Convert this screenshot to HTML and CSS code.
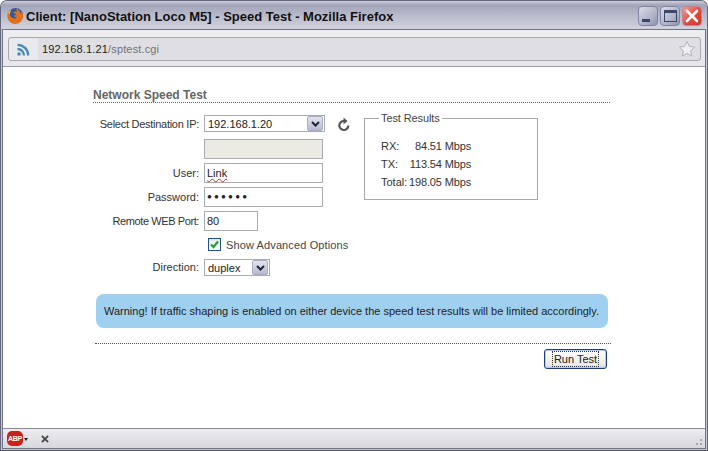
FILE: index.html
```html
<!DOCTYPE html>
<html lang="en">
<head>
<meta charset="utf-8">
<title>Speed Test</title>
<link rel="stylesheet" href="styles.css">
</head>
<body>
<div class="window">
  <header class="titlebar">
    <svg class="ff-icon" width="18" height="18" viewBox="0 0 18 18">
      <circle cx="9.500" cy="8.500" r="7.500" fill="#2f5a9f"/>
      <path d="M5 2.500C2 4 1 7 1.300 10c.7 4 4 7 7.700 7 4.500 0 8-3.500 8-8 0-2-.7-3.600-1.800-5 .3 1.300 0 2.200-.5 2.800C14.200 4 12 2.200 9.500 1.800c1 1 1.500 2 1.500 3-1.500-.5-3.300 0-3.800 1.200 1 .2 2.500.4 2.700 1.300.1.800-1 1.300-2 1.300.3 1.300 1.700 2 3 1.600-.8 1.300-3 1.700-4.700.8C4.500 9.800 3.600 8 4 6.200c.2-1.300.8-2.500 1-3.700z" fill="#e5701b"/>
      <path d="M5 2.500c-.2 1.200-.8 2.400-1 3.700l-1.500 1C2.500 5.300 3.500 3.500 5 2.500z" fill="#f6c63a"/>
    </svg>
    <span class="title-text">Client: [NanoStation Loco M5] - Speed Test - Mozilla Firefox</span>
    <div class="win-buttons">
      <span class="wbtn wbtn-min"><i class="min-glyph"></i></span>
      <span class="wbtn wbtn-max"><i class="max-glyph"></i></span>
      <span class="wbtn wbtn-close">
        <svg width="14" height="14" viewBox="0 0 14 14"><path d="M2 2l10 10M12 2L2 12" stroke="#fff" stroke-width="2.600" stroke-linecap="round"/></svg>
      </span>
    </div>
  </header>
  <div class="frame">
    <div class="addressbar">
      <div class="url-box">
        <span class="feed">
          <svg width="15" height="15" viewBox="0 0 15 15" fill="none" stroke="#4a8ab5" stroke-width="2.300">
            <circle cx="3" cy="12" r="1.800" fill="#4a8ab5" stroke="none"/>
            <path d="M1.500 7a6.500 6.500 0 0 1 6.500 6.500"/>
            <path d="M1.500 2.800a10.700 10.700 0 0 1 10.700 10.700"/>
          </svg>
        </span>
        <span class="url"><span class="url-host">192.168.1.21</span>/sptest.cgi</span>
        <svg class="star" width="18" height="18" viewBox="0 0 18 18"><path d="M9 1.500l2.300 4.900 5.300.7-3.900 3.600 1 5.300L9 13.400 4.300 16l1-5.300L1.400 7.100l5.300-.7z" fill="#f0f0f2" stroke="#b4b4b8"/></svg>
      </div>
    </div>
    <main class="content">
      <h1 class="heading">Network Speed Test</h1>
      <div class="columns">
        <div class="form">
          <label class="lbl lbl-first lbl-tight">Select Destination IP:</label>
          <div class="row-ctl">
            <div class="select select-wide"><span>192.168.1.20</span><i class="arrow"><svg width="9" height="6" viewBox="0 0 9 6"><path d="M1 1l3.500 3.500L8 1" fill="none" stroke="#1c2538" stroke-width="2"/></svg></i></div>
            <svg class="reload" width="16" height="16" viewBox="0 0 16 16" fill="none"><path d="M12.300 8.500A4.500 4.500 0 1 1 8 4" stroke="#555" stroke-width="2.200"/><path d="M7.500 0.500v7l4-3.500z" fill="#555"/></svg>
          </div>
          <span></span>
          <div class="input input-wide input-disabled"></div>
          <label class="lbl">User:</label>
          <div class="input input-wide"><span class="misspelt">Link</span></div>
          <label class="lbl">Password:</label>
          <div class="input input-wide dots">●●●●●●</div>
          <label class="lbl lbl-tighter">Remote WEB Port:</label>
          <div class="input input-port">80</div>
          <span></span>
          <div class="check-row">
            <span class="checkbox"><svg width="11" height="11" viewBox="0 0 11 11"><path d="M2 5.500l2.500 2.500L9 2.500" fill="none" stroke="#2f9a3c" stroke-width="2.200"/></svg></span>
            <span class="check-label">Show Advanced Options</span>
          </div>
          <label class="lbl lbl-direction">Direction:</label>
          <div class="select select-small"><span>duplex</span><i class="arrow"><svg width="9" height="6" viewBox="0 0 9 6"><path d="M1 1l3.500 3.500L8 1" fill="none" stroke="#1c2538" stroke-width="2"/></svg></i></div>
        </div>
        <fieldset class="results">
          <legend>Test Results</legend>
          <div class="result-grid">
            <span>RX:</span><span class="val">84.51 Mbps</span>
            <span>TX:</span><span class="val">113.54 Mbps</span>
            <span>Total:</span><span class="val">198.05 Mbps</span>
          </div>
        </fieldset>
      </div>
      <div class="warning">Warning! If traffic shaping is enabled on either device the speed test results will be limited accordingly.</div>
      <div class="actions"><button class="run" type="button"><span>Run Test</span></button></div>
    </main>
    <footer class="statusbar">
      <span class="abp">ABP</span>
      <i class="abp-caret"></i>
      <svg class="status-x" width="8" height="8" viewBox="0 0 9 9"><path d="M1 1l7 7M8 1L1 8" stroke="#444" stroke-width="2"/></svg>
      <span class="grip"></span>
    </footer>
  </div>
</div>
</body>
</html>
```
FILE: styles.css
```css
* { box-sizing: border-box; }
html, body { margin: 0; padding: 0; }
body { width: 708px; height: 451px; overflow: hidden; background: #fff; font-family: "Liberation Sans", Arial, sans-serif; font-size: 11px; color: #333; }

.window { width: 708px; height: 451px; display: flex; flex-direction: column; background: #c6c7d4; border-radius: 7px 7px 0 0; border: 1px solid #62677e; border-bottom-color: #555; }

.titlebar { height: 28px; flex: none; display: flex; align-items: center; padding: 0 3px 0 5px; border-radius: 6px 6px 0 0; background: linear-gradient(#cfd0dc 0, #a2a4b9 4px, #bcbdcd 16px, #d0d1dc 27px); }
.ff-icon { flex: none; margin-top: 2px; }
.title-text { margin-left: 2px; margin-top: 2px; font: bold 13px "Liberation Sans", sans-serif; letter-spacing: 0; color: #111; white-space: nowrap; }
.win-buttons { margin-left: auto; margin-right: 2px; display: flex; gap: 2px; margin-top: 1px; }
.wbtn { width: 20px; height: 20px; border-radius: 4px; border: 1px solid #7f84a0; display: flex; align-items: center; justify-content: center; background: linear-gradient(135deg, #dcdde8, #a9acc3 70%, #8d90ab); }
.wbtn-close { border-color: #c8818a; background: linear-gradient(135deg, #f0a094, #dd4a3c 55%, #c63a30); }
.min-glyph { display: block; width: 8px; height: 3px; background: #3b4668; margin: 9px 5px 0 0; }
.max-glyph { display: block; width: 13px; height: 12px; border: 1px solid #3b4668; border-top-width: 3px; }

.frame { flex: 1; display: flex; flex-direction: column; min-height: 0; margin: 0 1px 1px; border: 1px solid #6f7382; background: #fff; }
.addressbar { height: 37px; flex: none; padding: 7px 4px 6px 5px; background: linear-gradient(#eeeef1, #e8e8ec); border-bottom: 1px solid #9c9ca6; }
.url-box { height: 24px; display: flex; align-items: center; background: #dfdfe3; border: 1px solid #a8a8ae; border-radius: 3px; padding-right: 4px; }
.feed { width: 29px; height: 22px; display: flex; align-items: center; justify-content: center; background: #eaeaee; flex: none; border-radius: 3px 0 0 3px; }
.url { margin-left: 4px; color: #6f7278; font-size: 11px; letter-spacing: 0.150px; }
.url-host { color: #1a1a1a; }
.star { margin-left: auto; }

.content { flex: 1; min-height: 0; padding: 21px 94px 0 90px; background: #fff; }
.heading { margin: 0; height: 15px; line-height: 14px; font-size: 12px; font-weight: bold; color: #666; border-bottom: 1px dotted #666; width: 517px; }
.columns { display: flex; align-items: flex-start; margin-top: 12px; }
.form { display: grid; grid-template-columns: 106px auto; grid-template-rows: 20px 20px 20px 20px 20px 16px 17px; row-gap: 4px; column-gap: 5px; width: 271px; flex: none; }
.lbl { text-align: right; line-height: 20px; white-space: nowrap; color: #333; }
.lbl-first { line-height: 18px; }
.lbl-tight { letter-spacing: -0.270px; }
.lbl-tighter { letter-spacing: -0.400px; }
.lbl-direction { line-height: 24px; }
.form > .select { align-self: start; }
.row-ctl { display: flex; align-items: flex-start; height: 17px; }
.reload { margin: 2px 0 0 11px; }
.select { height: 17px; display: flex; align-items: center; justify-content: space-between; background: #fff; border: 1px solid #a5acb2; padding: 0 1px 0 3px; color: #222; }
.select-wide { width: 121px; }
.select-small { width: 66px; margin-top: 4px; }
.arrow { width: 16px; height: 15px; display: flex; align-items: center; justify-content: center; border: 1px solid #a8acc4; border-radius: 2px; background: linear-gradient(#e2e3ec, #b8bbcf); }
.input { height: 20px; border: 1px solid #a5acb2; background: #fff; padding: 0 2px; line-height: 18px; color: #222; }
.input-wide { width: 119px; }
.input-port { width: 54px; }
.input-disabled { background: #ebebe4; }
.misspelt { text-decoration: underline wavy #d23; text-decoration-thickness: 1px; text-underline-offset: 1px; }
.dots { font-size: 8px; letter-spacing: 2.200px; }
.check-row { display: flex; align-items: center; height: 13px; margin-top: 3px; padding-left: 4px; white-space: nowrap; color: #444; }
.check-label { letter-spacing: 0.120px; }
.checkbox { width: 13px; height: 13px; border: 1px solid #1c5180; background: linear-gradient(#e8e8e2, #fff); display: flex; align-items: center; justify-content: center; margin-right: 5px; }

.results { margin: -3px 0 0; width: 174px; height: 88px; padding: 12px 0 0 16px; border: 1px solid #a8a8a8; }
.results legend { padding: 0 2px; margin-left: -2px; line-height: 13px; color: #444; letter-spacing: -0.100px; }
.result-grid { display: grid; grid-template-columns: 25px 62px; grid-auto-rows: 18px; align-items: center; justify-content: start; column-gap: 3px; }
.result-grid .val { text-align: right; white-space: nowrap; letter-spacing: -0.150px; }

.warning { margin: 22px 0 0 3px; width: 512px; height: 34px; line-height: 34px; padding-left: 8px; white-space: nowrap; background: #9fd0ef; border-radius: 8px; color: #222; }
.actions { margin-top: 15px; padding-top: 5px; border-top: 1px dotted #555; width: 516px; margin-left: 2px; display: flex; justify-content: flex-end; padding-right: 4px; }
.run { width: 63px; height: 20px; padding: 0; font: 11px "Liberation Sans", Arial, sans-serif; color: #222; border: 1px solid #1d3e7c; border-radius: 3px; background: linear-gradient(#fff, #ecebe6 80%, #cdd3ea); box-shadow: inset 0 0 0 1px #b8c8ee; }
.run span { display: inline-block; padding: 1px 1px; outline: 1px dotted #333; }

.statusbar { height: 20px; flex: none; display: flex; align-items: center; padding-left: 4px; background: linear-gradient(#eeeef1, #d6d6dc); border-top: 1px solid #8a8a94; position: relative; }
.abp { width: 16px; height: 15px; border-radius: 5px; background: #c9211e; color: #fff; font-size: 7px; font-weight: bold; text-align: center; line-height: 15px; letter-spacing: -0.300px; white-space: nowrap; }
.abp-caret { width: 0; height: 0; border: 2.500px solid transparent; border-top: 3px solid #222; margin: 3px 0 0 1px; }
.status-x { margin-left: 13px; }
.grip { position: absolute; right: 1px; bottom: 1px; width: 12px; height: 12px; background: radial-gradient(circle at 1px 1px, #a5a5ab 1px, transparent 1.200px) 0 0 / 4px 4px; clip-path: polygon(100% 0, 100% 100%, 0 100%); }
```
